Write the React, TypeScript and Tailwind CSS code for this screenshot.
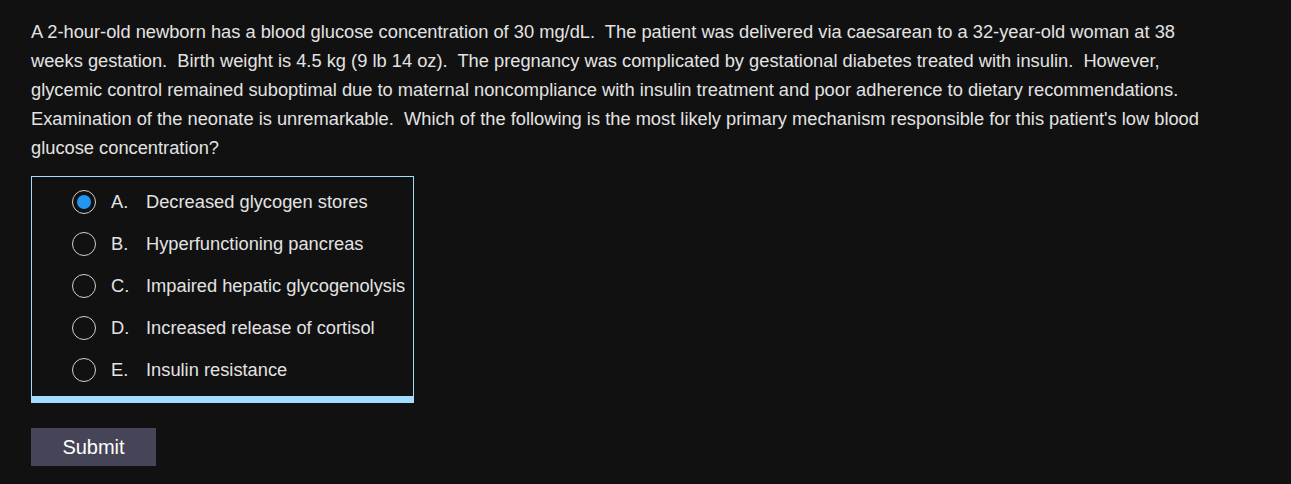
import React from "react";

const question =
  "A 2-hour-old newborn has a blood glucose concentration of 30 mg/dL.  The patient was delivered via caesarean to a 32-year-old woman at 38 weeks gestation.  Birth weight is 4.5 kg (9 lb 14 oz).  The pregnancy was complicated by gestational diabetes treated with insulin.  However, glycemic control remained suboptimal due to maternal noncompliance with insulin treatment and poor adherence to dietary recommendations.  Examination of the neonate is unremarkable.  Which of the following is the most likely primary mechanism responsible for this patient's low blood glucose concentration?";

const options = [
  { l: "A.", t: "Decreased glycogen stores" },
  { l: "B.", t: "Hyperfunctioning pancreas" },
  { l: "C.", t: "Impaired hepatic glycogenolysis" },
  { l: "D.", t: "Increased release of cortisol" },
  { l: "E.", t: "Insulin resistance" },
];

export default function App() {
  return (
    <div
      className="min-h-[484px] w-full bg-[#111111] text-[#e3e3e3] px-[31px] pt-[17px]"
      style={{ fontFamily: '"Liberation Sans", Arial, sans-serif' }}
    >
      <p className="w-[1190px] text-[18.3px] leading-[29px] whitespace-pre-wrap">{question}</p>
      <div className="mt-[14px] w-[383px] border border-[#a3dcff] border-b-[7px] pt-[4px] pb-[5px]">
        {options.map((o, i) => (
          <div key={o.l} className="flex h-[42px] items-center pl-[40px]">
            <div className="flex h-[24px] w-[24px] items-center justify-center rounded-full border-[1.5px] border-[#d0d0d0]">
              {i === 0 && <div className="h-[14px] w-[14px] rounded-full bg-[#2196f3]" />}
            </div>
            <span className="ml-[15px] w-[35px] text-[18.3px]">{o.l}</span>
            <span className="text-[18.3px] whitespace-nowrap">{o.t}</span>
          </div>
        ))}
      </div>
      <button className="mt-[25px] h-[38px] w-[125px] bg-[#464557] text-[20px] text-white">
        Submit
      </button>
    </div>
  );
}
